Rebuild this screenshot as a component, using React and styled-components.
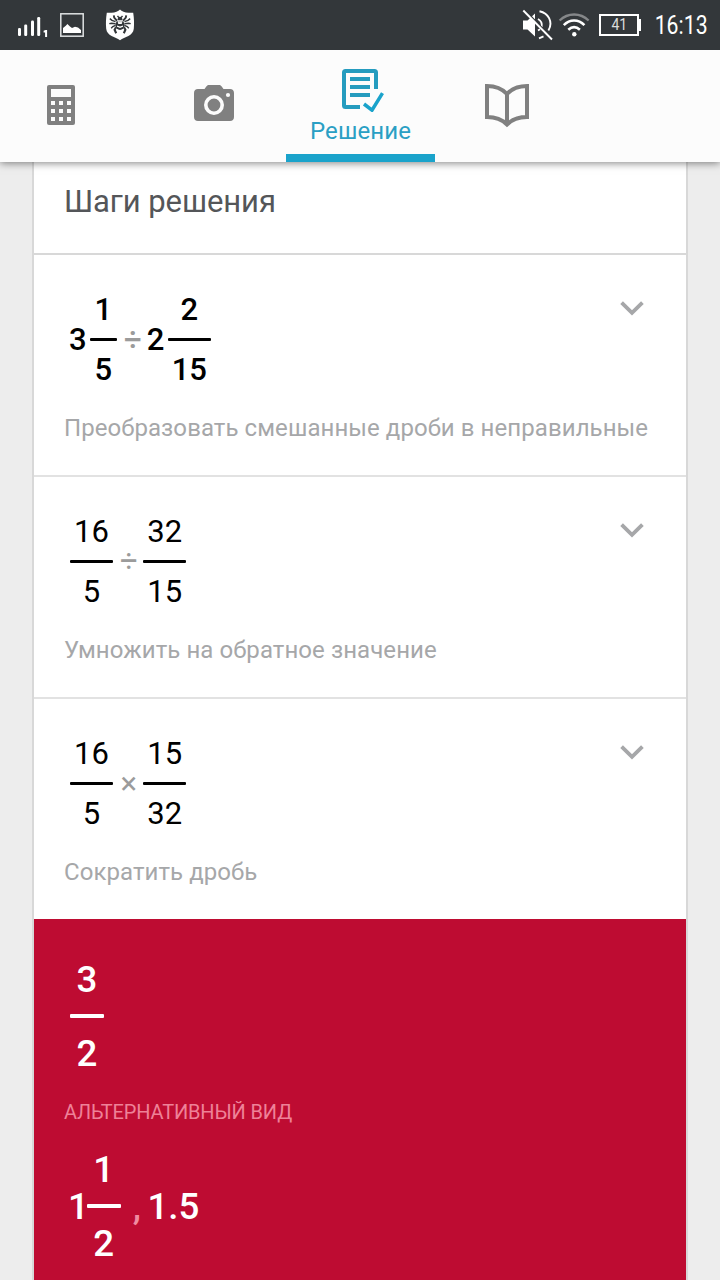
import React from "react";
import styled, { createGlobalStyle } from "styled-components";

const steps = [
  {
    bold: true,
    items: [
      { whole: "3", num: "1", den: "5" },
      { op: "÷" },
      { whole: "2", num: "2", den: "15" },
    ],
    text: "Преобразовать смешанные дроби в неправильные",
  },
  {
    items: [{ num: "16", den: "5" }, { op: "÷" }, { num: "32", den: "15" }],
    text: "Умножить на обратное значение",
  },
  {
    items: [{ num: "16", den: "5" }, { op: "×" }, { num: "15", den: "32" }],
    text: "Сократить дробь",
  },
];

const SignalIcon = () => (
  <svg width="32" height="24" viewBox="17 15 32 24" fill="#fff">
    <rect x="18" y="28" width="3" height="8" rx="1.2" />
    <rect x="24.2" y="24.5" width="3" height="11.5" rx="1.2" />
    <rect x="31" y="20.5" width="3" height="15.5" rx="1.2" />
    <rect x="37.2" y="17" width="3" height="19" rx="1.2" />
    <path d="M43.6 30.8l2-.9h1.500V37h-2v-4.600h-1.500z" />
  </svg>
);

const PictureIcon = () => (
  <svg width="24" height="24" viewBox="0 0 24 24">
    <rect x="0.8" y="0.8" width="22.4" height="22.4" fill="none" stroke="#dfe2e3" strokeWidth="1.5" />
    <path d="M3 20v-5l2.800-2.200 1.600-1.700L10 13.500l2 1.500 3-1.200 3 .6 3 2.600v3z" fill="#fff" />
  </svg>
);

const ShieldIcon = () => (
  <svg width="30" height="32" viewBox="105 9 30 32">
    <path
      d="M120 9.400c1.600 1.900 5 3.100 8.400 3.300h4.800c.9 6 1.100 10.700.6 16-.4 3.500-2.500 5.600-5.400 7.300-3 1.500-5.900 2.400-8.400 4.300-2.500-1.900-5.400-2.800-8.400-4.300-2.900-1.700-5-3.800-5.400-7.300-.5-5.300-.3-10 .6-16h4.800c3.400-.2 6.800-1.400 8.400-3.300z"
      fill="#fff"
    />
    <g fill="none" stroke="#33373a" strokeWidth="1.400">
      <path d="M113.800 15.300l.4 2.300 2.800 3.200M126.200 15.300l-.4 2.300-2.800 3.200" strokeWidth="1.900" />
      <path d="M109.800 18.600l2.200 1.800 3.500 1.200M130.200 18.600l-2.200 1.800-3.500 1.200" />
      <path d="M109.300 23.600l2.200-.4 4 .6M130.700 23.600l-2.200-.4-4 .6" />
      <path d="M111.200 28.200l1.600-1.700 2.700-1.200M128.800 28.200l-1.600-1.700-2.700-1.200" />
      <path d="M116 27.200l-1.400 2.600 1.600 3.400M124 27.200l1.400 2.600-1.600 3.400" strokeWidth="2.100" />
      <path d="M117.500 15.800l1.400 1.900M122.500 15.800l-1.400 1.900" />
    </g>
    <circle cx="120" cy="19.200" r="2.400" fill="#33373a" />
    <ellipse cx="120" cy="25" rx="4.600" ry="4.900" fill="#33373a" />
    <path d="M117.300 20.300h5.400l-1 3.600h-3.400zM117 25.400l3 1.200 3-1.200v1.400l-3 1.200-3-1.200z" fill="#fff" />
    <path d="M118.600 21.800h1M120.500 21.800h1" stroke="#33373a" strokeWidth="0.700" />
  </svg>
);

const MuteIcon = () => (
  <svg width="31" height="32" viewBox="522 9 31 32" fill="none" stroke="#fff" strokeWidth="1.900">
    <path d="M523 20.500h4.500L535 13.500v23l-7.500-7H523z" fill="#fff" stroke="none" />
    <path d="M538 19c2.800 1.500 4.300 4.500 3.600 8M538 30.500l2-1.200" />
    <path d="M539.500 11.200c4.500 1 7.800 3.300 9.600 7 1.900 4 1.700 8.500-.7 12.300M539 38.300l4.500-1.900" />
    <path d="M525 10.500L553 39.500" stroke="#33373a" strokeWidth="2" />
    <path d="M523.300 10.500L552 39.500" />
  </svg>
);

const WifiIcon = () => (
  <svg width="32" height="26" viewBox="558 12 32 26" fill="none" stroke="#fff" strokeWidth="2.300">
    <path d="M559.600 20.500c8.300-8 20.700-8 29 0" stroke="#858789" />
    <path d="M563.800 25.200c6-6.200 14.600-6.200 20.600 0" strokeWidth="2.600" />
    <path d="M568.300 29.700c3.600-3.300 8-3.300 11.600 0" strokeWidth="2.600" />
    <circle cx="574.300" cy="34.300" r="2.200" fill="#fff" stroke="none" />
  </svg>
);

const CalculatorIcon = () => (
  <svg width="28" height="40" viewBox="0 0 28 40">
    <rect width="28" height="40" rx="2" fill="#808080" />
    <path
      d="M4 4h20v8H4zM4 16h4v4H4zM12 16h4v4h-4zM20 16h4v4h-4zM4 24h4v4H4zM12 24h4v4h-4zM20 24h4v4h-4zM4 32h4v4H4zM12 32h4v4h-4zM20 32h4v4h-4z"
      fill="#fcfcfc"
    />
  </svg>
);

const CameraIcon = () => (
  <svg width="40" height="36" viewBox="0 0 40 36">
    <path
      d="M4 4h6.500l2-2.700C13.200.3 14 0 15 0h10c1 0 1.800.3 2.500 1.300l2 2.700H36c2.500 0 4 1.500 4 4v24c0 2.500-1.500 4-4 4H4c-2.500 0-4-1.500-4-4V8c0-2.500 1.500-4 4-4z"
      fill="#808080"
    />
    <circle cx="20" cy="20" r="8.200" fill="none" stroke="#fcfcfc" strokeWidth="3.600" />
    <circle cx="34" cy="10" r="2.100" fill="#fcfcfc" />
  </svg>
);

const SolutionIcon = () => (
  <svg width="44" height="44" viewBox="341 68 44 44" fill="none" stroke="#259cbf" strokeWidth="4">
    <path d="M360 107h-14.500q-1.500 0-1.500-1.500v-33q0-1.500 1.500-1.500h29q1.500 0 1.500 1.500V89" />
    <path d="M350 79h20M350 87h20M350 95h20" />
    <path d="M364 104l8 6.200 10.500-17" stroke="#1aa3cb" strokeWidth="3.500" />
  </svg>
);

const BookIcon = () => (
  <svg width="44" height="44" viewBox="485 83 44 44" fill="none" stroke="#808080" strokeWidth="4">
    <path d="M487 85c8 0 15 2.600 20 8 5-5.400 12-8 20-8v31c-8 0-15 2.400-20 7.500-5-5.100-12-7.500-20-7.500zM507 93v30" />
  </svg>
);

const ChevronIcon = () => (
  <svg width="24" height="16" viewBox="0 0 24 16" fill="none" stroke="#a6a7a9" strokeWidth="3.800">
    <path d="M1.600 2.600L12 12.800 22.400 2.600" />
  </svg>
);

function Expression({ items, bold, big }) {
  return (
    <Row $bold={bold} $big={big}>
      {items.map((item, i) =>
        item.op ? (
          <Operator key={i}>{item.op}</Operator>
        ) : (
          <React.Fragment key={i}>
            {item.whole && <span>{item.whole}</span>}
            <Fraction $mixed={Boolean(item.whole)} $big={big}>
              <span>{item.num}</span>
              <Bar $big={big} />
              <span>{item.den}</span>
            </Fraction>
          </React.Fragment>
        )
      )}
      {big === "alt" && (
        <>
          <Comma>,</Comma>
          <span>1.5</span>
        </>
      )}
    </Row>
  );
}

export default function App() {
  return (
    <Screen>
      <GlobalStyle />
      <StatusBar>
        <StatusLeft>
          <SignalIcon />
          <PictureIcon />
          <ShieldIcon />
        </StatusLeft>
        <StatusRight>
          <MuteIcon />
          <WifiIcon />
          <Battery>
            <Narrow $size={16.5}>41</Narrow>
          </Battery>
          <Clock>
            <Narrow $size={25}>16:13</Narrow>
          </Clock>
        </StatusRight>
      </StatusBar>
      <Tabs>
        <Tab>
          <CalculatorIcon />
        </Tab>
        <Tab>
          <CameraIcon />
        </Tab>
        <Tab $active>
          <SolutionIcon />
          <TabLabel>Решение</TabLabel>
        </Tab>
        <Tab>
          <BookIcon />
        </Tab>
      </Tabs>
      <Card>
        <Title>Шаги решения</Title>
        {steps.map((step) => (
          <Step key={step.text}>
            <StepTop>
              <Expression items={step.items} bold={step.bold} />
              <Toggle>
                <ChevronIcon />
              </Toggle>
            </StepTop>
            <Caption>{step.text}</Caption>
          </Step>
        ))}
        <Result>
          <Expression items={[{ num: "3", den: "2" }]} bold big="main" />
          <AltTitle>АЛЬТЕРНАТИВНЫЙ ВИД</AltTitle>
          <Expression items={[{ whole: "1", num: "1", den: "2" }]} bold big="alt" />
        </Result>
      </Card>
    </Screen>
  );
}

const GlobalStyle = createGlobalStyle`
  * {
    box-sizing: border-box;
  }
  body {
    margin: 0;
    overflow: hidden;
    font-family: Roboto, "Noto Sans", sans-serif;
  }
  svg {
    display: block;
    flex: none;
  }
`;
const Screen = styled.div`
  width: 720px;
  height: 1280px;
  display: flex;
  flex-direction: column;
  overflow: hidden;
  background: #ededed;
`;
const StatusBar = styled.div`
  flex: none;
  height: 50px;
  display: flex;
  justify-content: space-between;
  align-items: center;
  padding: 0 12.5px 0 17px;
  background: #33373a;
`;
const StatusLeft = styled.div`
  display: flex;
  align-items: center;
  gap: 11px;
  svg:first-child {
    margin-top: 4px;
  }
  svg:last-child {
    margin-left: 10px;
  }
`;
const StatusRight = styled.div`
  display: flex;
  align-items: center;
  color: #fff;
  svg:first-child {
    margin-right: 5px;
  }
`;
const Battery = styled.div`
  width: 40px;
  height: 22px;
  margin: 0 15.5px 0 9px;
  padding-left: 1px;
  display: flex;
  justify-content: center;
  align-items: center;
  border: 2px solid #fff;
  color: #dcdddd;
  position: relative;
  &::after {
    content: "";
    position: absolute;
    right: -4px;
    top: 3px;
    width: 3px;
    height: 12px;
    background: #fff;
  }
`;
const Clock = styled.div`
  width: 53px;
  padding-top: 1px;
  display: flex;
  justify-content: center;
`;
const Narrow = styled.span`
  font-size: ${(p) => p.$size}px;
  line-height: 1;
  transform: scaleX(0.85);
`;
const Tabs = styled.nav`
  flex: none;
  height: 112px;
  display: grid;
  grid-template-columns: 142px 144px 149px 144px;
  background: #fcfcfc;
  box-shadow: 0 1px 8px rgba(0, 0, 0, 0.5);
  clip-path: inset(0 0 -16px 0);
  z-index: 1;
`;
const Tab = styled.div`
  display: flex;
  flex-direction: column;
  align-items: center;
  justify-content: ${(p) => (p.$active ? "flex-start" : "center")};
  padding-top: ${(p) => (p.$active ? 18 : 0)}px;
  border-bottom: ${(p) => (p.$active ? "8px solid #1aa3cb" : "none")};
  &:first-child {
    padding-right: 20px;
    padding-bottom: 2px;
  }
  &:nth-child(2) {
    padding-bottom: 6px;
  }
  &:nth-child(3) svg {
    margin-left: 4px;
  }
  &:last-child {
    padding-bottom: 1px;
  }
`;
const TabLabel = styled.span`
  margin-top: 4px;
  font-size: 24px;
  line-height: 30px;
  letter-spacing: 0.1px;
  color: #2a9fc4;
`;
const Card = styled.main`
  flex: none;
  width: 656px;
  height: 1118px;
  margin: 0 auto;
  border: solid #d8d8d8;
  border-width: 0 2px;
  background: #fff;
`;
const Title = styled.h1`
  height: 93px;
  margin: 0;
  padding: 20px 30px 0;
  border-bottom: 2px solid #d8d8d8;
  font-size: 31px;
  font-weight: 400;
  line-height: 40px;
  letter-spacing: -0.08px;
  color: #545659;
`;
const Step = styled.section`
  height: 222px;
  padding: 36px 30px 0;
  border-bottom: 2px solid #e2e2e2;
  &:nth-of-type(3) {
    height: 220px;
    border-bottom: none;
  }
`;
const StepTop = styled.div`
  display: flex;
  justify-content: space-between;
`;
const Toggle = styled.div`
  width: 24px;
  margin: 9px 12px 0 0;
`;
const Row = styled.div`
  display: flex;
  align-items: center;
  padding: 1px 0 0 ${(p) => (p.$big === "alt" ? 4 : 5)}px;
  font-size: ${(p) => (p.$big ? 36.7 : 31)}px;
  line-height: ${(p) => (p.$big ? 44 : 36)}px;
  font-weight: ${(p) => (p.$bold ? 500 : 400)};
`;
const Fraction = styled.span`
  display: flex;
  flex-direction: column;
  align-items: center;
  margin-left: ${(p) => (p.$mixed ? (p.$big ? -2 : 3.2) : 0.4)}px;
  &:first-child {
    margin-left: 1px;
  }
  > span {
    padding: 0 ${(p) => (p.$big ? 6.5 : p.$mixed ? 4.1 : 4)}px;
  }
  > span:first-child {
    min-width: ${(p) => (p.$mixed && !p.$big ? 27 : 0)}px;
    text-align: center;
  }
`;
const Bar = styled.i`
  align-self: stretch;
  height: ${(p) => (p.$big ? 4 : 3)}px;
  margin: ${(p) => (p.$big ? "12px 0 14px" : "10px 0 11px")};
  border-radius: 1px;
  background: currentColor;
`;
const Operator = styled.span`
  width: 28px;
  margin-left: 2px;
  text-align: center;
  color: #9b9b9b;
`;
const Comma = styled.span`
  margin: 0 6.5px 0 12px;
  color: #f08ba1;
`;
const Caption = styled.p`
  margin: 25px 0 0;
  font-size: 24px;
  line-height: 30px;
  letter-spacing: 0.07px;
  white-space: nowrap;
  color: #a6a7a9;
`;
const Result = styled.div`
  height: 361px;
  padding: 38px 30px 0;
  background: #be0c32;
  color: #fff;
`;
const AltTitle = styled.p`
  margin: 24px 0 23px;
  font-size: 20px;
  line-height: 24px;
  letter-spacing: -0.16px;
  color: #ee8198;
`;
